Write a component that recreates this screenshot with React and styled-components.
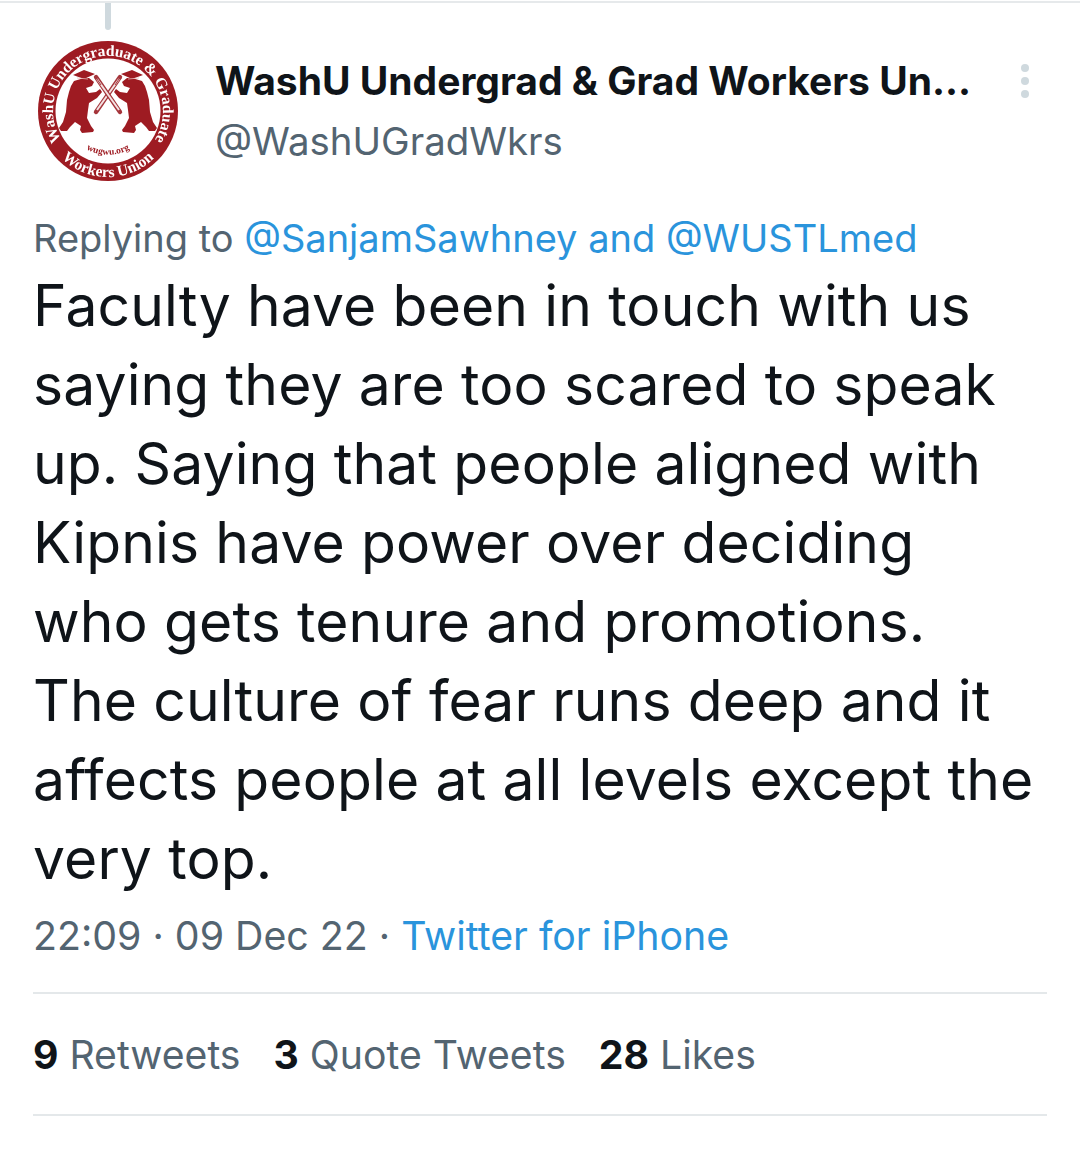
import React from "react";
import styled, { createGlobalStyle } from "styled-components";

const Global = createGlobalStyle`
  html, body { margin: 0; padding: 0; background: #fff; }
  body { font-family: Inter, "Liberation Sans", sans-serif; color: #0f1419; }
`;

const Page = styled.main`
  width: 1080px;
  height: 1154px;
  box-sizing: border-box;
  border-top: 2px solid #e6e9eb;
  margin-top: 1px;
  padding: 0 33px;
  overflow: hidden;
`;
const Header = styled.header`
  display: flex;
  align-items: flex-start;
  height: 200px;
`;
const AvatarColumn = styled.div`
  display: flex;
  flex-direction: column;
  align-items: center;
  width: 148px;
  margin-left: 1px;
`;
const ThreadStub = styled.div`
  width: 6px;
  height: 27px;
  background: #cfd9de;
  border-radius: 0 0 3px 3px;
  margin-bottom: 10px;
`;
const Logo = styled.svg`
  width: 142px;
  height: 142px;
  filter: blur(0.4px);
`;
const Identity = styled.div`
  flex: 1;
  margin-left: 33px;
  padding-top: 53px;
`;
const Name = styled.div`
  font-size: 39px;
  font-weight: 700;
  line-height: 50px;
  white-space: nowrap;
`;
const Handle = styled.div`
  font-size: 38.4px;
  line-height: 50px;
  margin-top: 10px;
  color: #536471;
`;
const More = styled.svg`
  width: 12px;
  height: 36px;
  margin-top: 60px;
  margin-right: 16px;
`;
const Reply = styled.div`
  font-size: 38px;
  line-height: 50px;
  color: #536471;
  margin-top: 10px;
`;
const Mention = styled.span`
  color: #2a94dc;
`;
const Body = styled.p`
  margin: 3px 0 0;
  font-size: 57px;
  line-height: 79px;
  letter-spacing: 0.12px;
  white-space: pre-line;
`;
const Meta = styled.div`
  font-size: 39.3px;
  line-height: 50px;
  color: #536471;
  margin-top: 13px;
`;
const Rule = styled.hr`
  border: 0;
  height: 2px;
  background: #e4e8ea;
  margin: 0;
`;
const MetaRule = styled(Rule)`
  margin-top: 31px;
`;
const Stats = styled.div`
  display: flex;
  gap: 33px;
  height: 120px;
  align-items: center;
  font-size: 39.2px;
  color: #536471;
`;
const Stat = styled.span`
  white-space: nowrap;
`;
const Count = styled.b`
  font-weight: 700;
  color: #0f1419;
`;

const BEAR =
  "M47 38 L52 38 L57 42 L55 46 L49 48 L52 53 L59 52 L63 49 L65 52 L60 58 L52 63 L51 70 L50 78 L54 86 L57 90 L56 92 L45 93 L43 90 L44 86 L38 82 L33 87 L30 91 L24 91 L22 88 L26 82 L29 72 L30 60 L32 52 L34 46 L37 41 Z";

const Bear = ({ flip }) => (
  <g transform={flip ? "translate(142 0) scale(-1 1)" : undefined}>
    <path d={BEAR} fill="#9e1b22" />
    <path d="M36 35 L47 30 L58 34 L47 39 Z" fill="#9e1b22" />
    <path d="M40 38 L51 39" stroke="#e7b9b9" strokeWidth="0.8" />
  </g>
);

const Pencil = ({ flip }) => (
  <g transform={flip ? "translate(142 0) scale(-1 1)" : undefined}>
    <path d="M59 37 L83 72" stroke="#a5353b" strokeWidth="4.4" strokeLinecap="round" />
    <path d="M60 39 L82 70" stroke="#f4e2e2" strokeWidth="2" />
    <path d="M60 39 L64 45" stroke="#a5353b" strokeWidth="1" />
  </g>
);

const UnionLogo = () => (
  <Logo viewBox="0 0 142 142" role="img" aria-label="WashU Undergraduate & Graduate Workers Union">
    <defs>
      <path id="arcTop" d="M 24.4 100 A 55 55 0 1 1 117.6 100" />
      <path id="arcBottom" d="M 15 106 A 66 66 0 0 0 127 106" />
      <path id="arcUrl" d="M 46 107 A 44 44 0 0 0 96 107" />
    </defs>
    <circle cx="71" cy="71" r="70" fill="#9e1b22" />
    <circle cx="71" cy="71" r="52.5" fill="#fff" />
    <Pencil flip />
    <Pencil />
    <Bear />
    <Bear flip />
    <text fontFamily="Liberation Serif, serif" fontWeight="700" fontSize="15.5" fill="#fff" textLength="234" lengthAdjust="spacing">
      <textPath href="#arcTop">WashU Undergraduate &amp; Graduate</textPath>
    </text>
    <text fontFamily="Liberation Serif, serif" fontWeight="700" fontSize="15.5" fill="#fff">
      <textPath href="#arcBottom" startOffset="50%" textAnchor="middle">Workers Union</textPath>
    </text>
    <text fontFamily="Liberation Serif, serif" fontWeight="700" fontSize="9.5" fill="#9e1b22">
      <textPath href="#arcUrl" startOffset="50%" textAnchor="middle">wugwu.org</textPath>
    </text>
  </Logo>
);

export default function App() {
  return (
    <>
      <Global />
      <Page>
        <Header>
          <AvatarColumn>
            <ThreadStub />
            <UnionLogo />
          </AvatarColumn>
          <Identity>
            <Name>WashU Undergrad &amp; Grad Workers Un...</Name>
            <Handle>@WashUGradWkrs</Handle>
          </Identity>
          <More viewBox="0 0 12 36" aria-label="More">
            <circle cx="6" cy="5" r="4" fill="#cfd9de" />
            <circle cx="6" cy="18" r="4" fill="#cfd9de" />
            <circle cx="6" cy="31" r="4" fill="#cfd9de" />
          </More>
        </Header>
        <Reply>
          Replying to <Mention>@SanjamSawhney and @WUSTLmed</Mention>
        </Reply>
        <Body>{`Faculty have been in touch with us
saying they are too scared to speak
up. Saying that people aligned with
Kipnis have power over deciding
who gets tenure and promotions.
The culture of fear runs deep and it
affects people at all levels except the
very top.`}</Body>
        <Meta>
          22:09 · 09 Dec 22 · <Mention>Twitter for iPhone</Mention>
        </Meta>
        <MetaRule />
        <Stats>
          <Stat><Count>9</Count> Retweets</Stat>
          <Stat><Count>3</Count> Quote Tweets</Stat>
          <Stat><Count>28</Count> Likes</Stat>
        </Stats>
        <Rule />
      </Page>
    </>
  );
}
